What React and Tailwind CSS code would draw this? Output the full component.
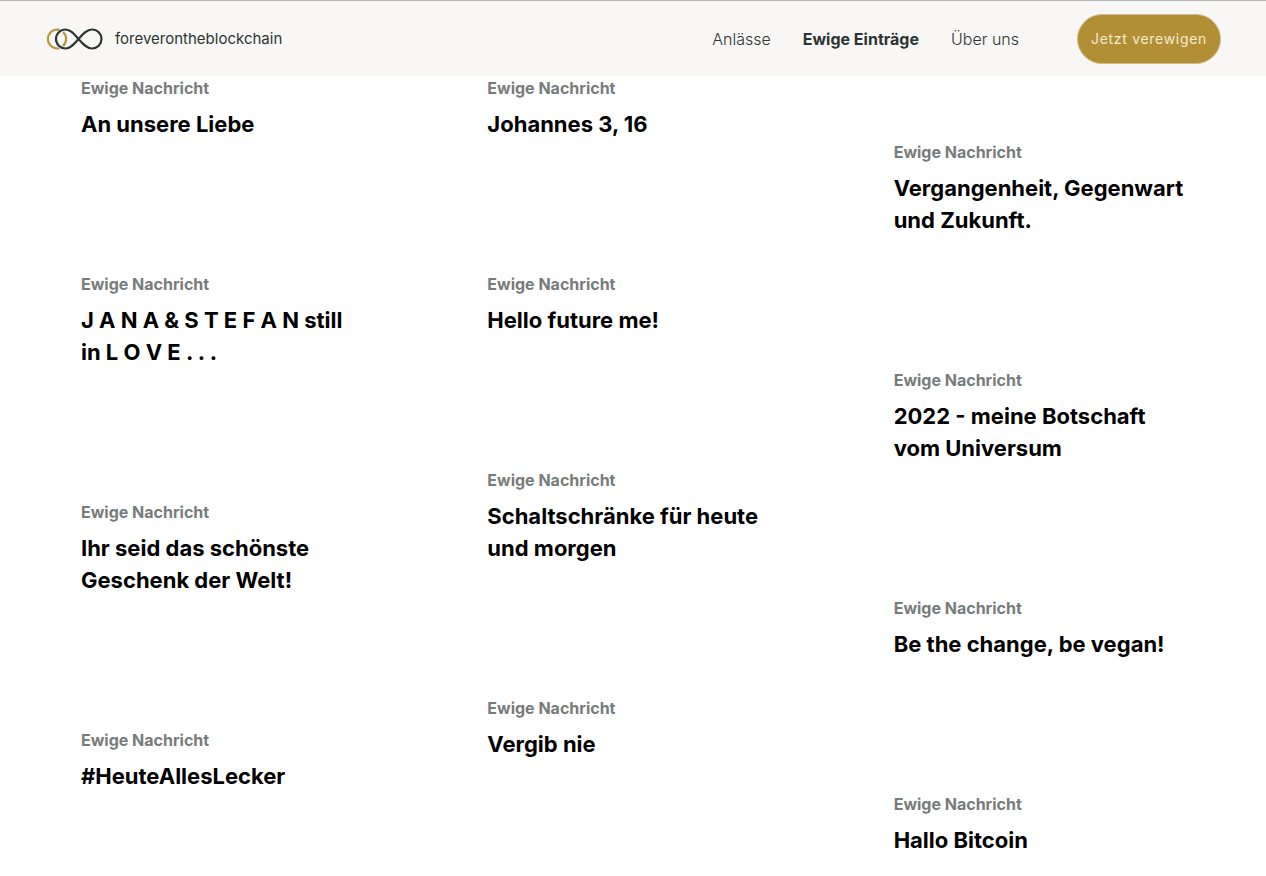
import React from 'react';
import clsx from 'clsx';

const navItems = [
  { label: 'Anlässe', active: false },
  { label: 'Ewige Einträge', active: true },
  { label: 'Über uns', active: false },
];

const columns = [
  ['An unsere Liebe', 'J A N A & S T E F A N still in\u00a0L O V E . . .', 'Ihr seid das schönste Geschenk der Welt!', '#HeuteAllesLecker'],
  ['Johannes 3, 16', 'Hello future me!', 'Schaltschränke für heute und morgen', 'Vergib nie'],
  ['Vergangenheit, Gegenwart und Zukunft.', '2022 - meine Botschaft vom Universum', 'Be the change, be vegan!', 'Hallo Bitcoin'],
];

const Logo = () => (
  <svg width="57" height="24" viewBox="0 0 57 24" fill="none" strokeWidth="2.2" aria-hidden="true">
    <path d="M13.5 21.2A9.3 9.3 0 0 1 11.4 21.5A9.5 9.5 0 0 1 11.4 2.5A9.3 9.3 0 0 1 13.5 2.8" stroke="#b8963e" />
    <path d="M17 5A9.5 9.5 0 0 1 17 19" stroke="#b8963e" />
    <path
      d="M32.5 12C28.5 7.6 25 2.5 19.5 2.5A9.5 9.5 0 0 0 19.5 21.5C25 21.5 28.5 16.4 32.5 12C36.5 7.6 40.5 2.5 46 2.5A9.5 9.5 0 0 1 46 21.5C40.5 21.5 36.5 16.4 32.5 12Z"
      stroke="#2b3533"
    />
  </svg>
);

const Header = () => (
  <header className="sticky top-0 z-10 flex h-[76px] items-center justify-between border-t border-[#b9b9b9] bg-[#f9f7f5] pl-[46px] pr-[45px] text-[#2b3533]">
    <a href="#" className="flex items-center gap-3">
      <Logo />
      <span className="text-[15px] leading-6">foreverontheblockchain</span>
    </a>
    <div className="flex items-center gap-[58px]">
      <nav className="flex items-center gap-8">
        {navItems.map((item) => (
          <a key={item.label} href="#" className={clsx('text-base', item.active ? 'font-bold' : 'font-light')}>
            {item.label}
          </a>
        ))}
      </nav>
      <button className="h-[50px] w-[144px] rounded-full border border-[#d2bd88] bg-[#b28e35] text-sm tracking-wider text-[#f5ecd2]">
        Jetzt verewigen
      </button>
    </div>
  </header>
);

const Entry = ({ title }) => (
  <article className="px-8">
    <p className="mb-2 text-base font-bold text-[#777c7b]">Ewige Nachricht</p>
    <h2 className="text-[22px] leading-8 font-bold text-black">{title}</h2>
  </article>
);

const App = () => {
  return (
    <div className="min-h-screen bg-white font-['Inter',sans-serif]">
      <Header />
      <main className="grid grid-cols-3 gap-[50px] pl-[49px] pr-12">
        {columns.map((titles, idx) => (
          <section key={idx} className={clsx('flex flex-col gap-[132px]', idx === 2 && 'pt-16')}>
            {titles.map((title) => (
              <Entry key={title} title={title} />
            ))}
          </section>
        ))}
      </main>
    </div>
  );
};

export default App;
